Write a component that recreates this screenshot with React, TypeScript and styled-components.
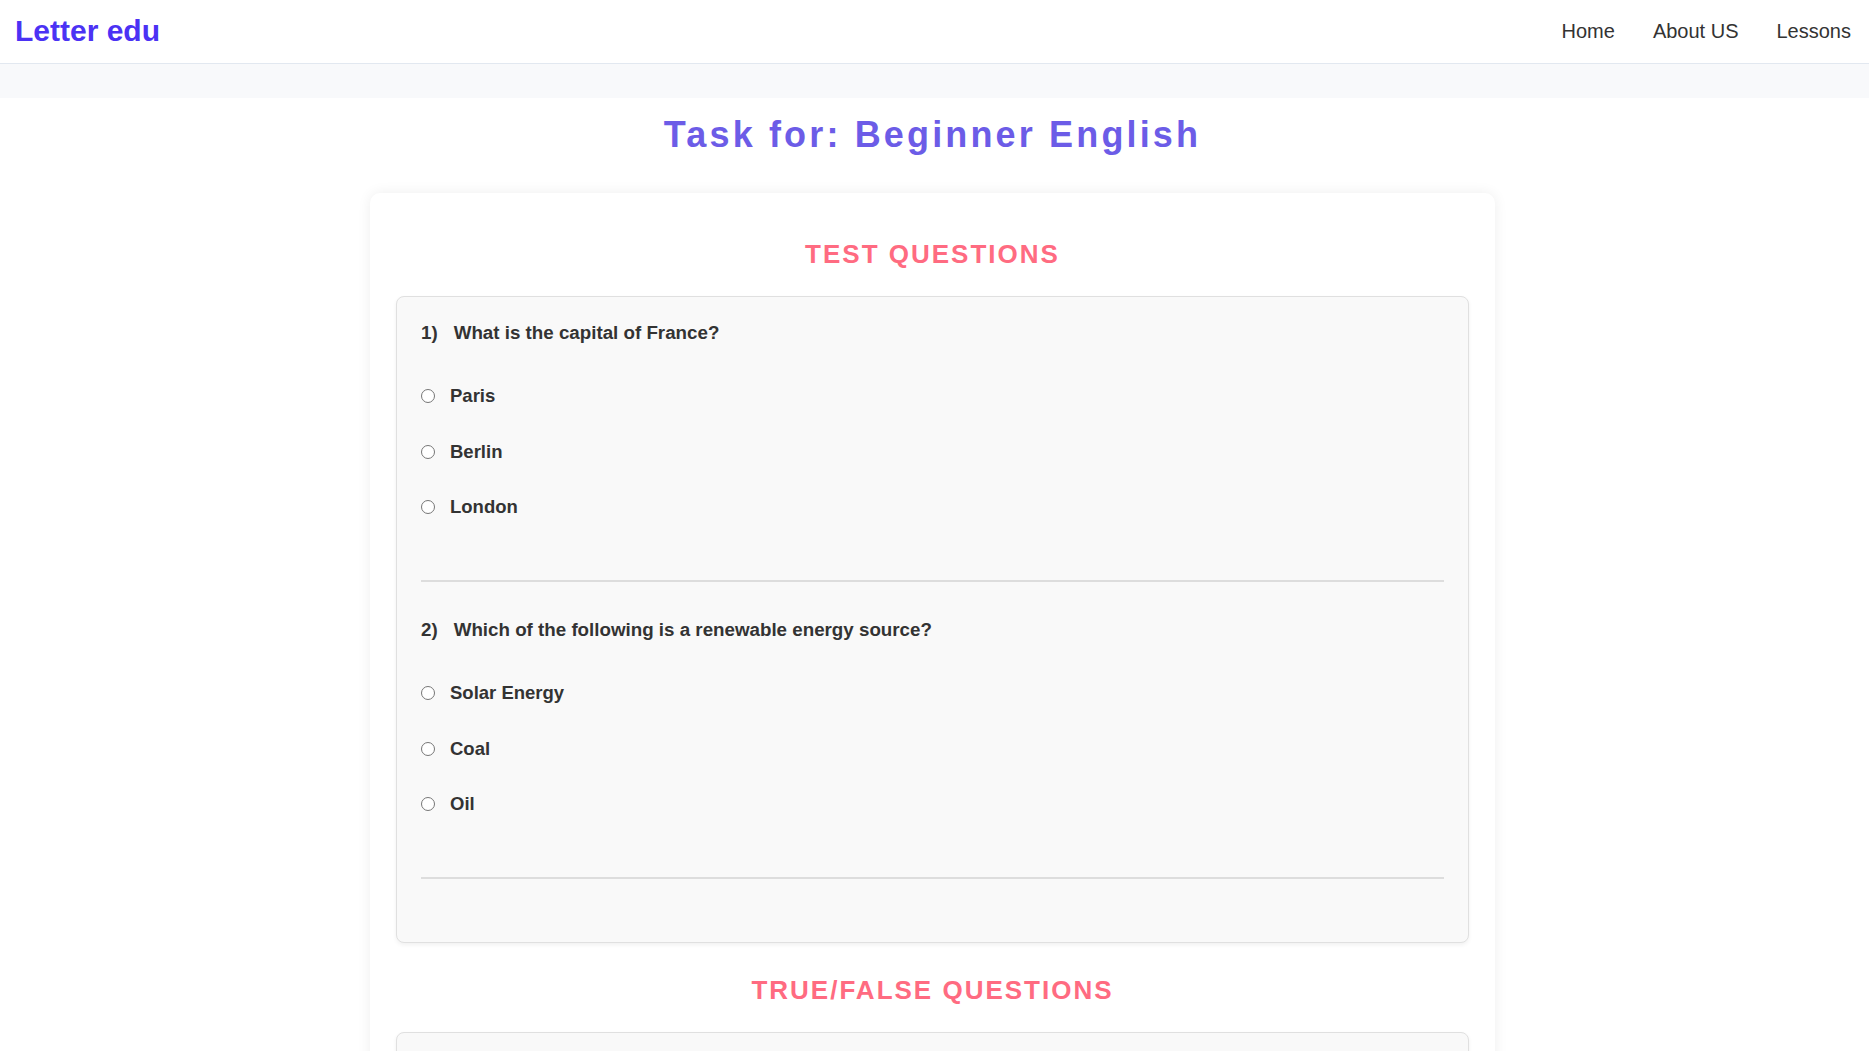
import React from "react";
import styled, { createGlobalStyle } from "styled-components";

const GlobalStyle = createGlobalStyle`
  html, body {
    margin: 0;
    padding: 0;
    background: #ffffff;
    font-family: "Liberation Sans", Arial, Helvetica, sans-serif;
    color: #333333;
  }
  * { box-sizing: border-box; }
  ::-webkit-scrollbar { display: none; }
`;

const Header = styled.header`
  height: 64px;
  display: flex;
  align-items: center;
  justify-content: space-between;
  padding: 0 18px 0 15px;
  background: #ffffff;
  border-bottom: 1px solid #e2e8f0;
`;

const Logo = styled.a`
  font-size: 30px;
  font-weight: 700;
  color: #4b32f4;
  text-decoration: none;
  line-height: 34px;
  padding-bottom: 2px;
`;

const Nav = styled.nav`
  display: flex;
  align-items: center;
  gap: 38px;
`;

const NavLink = styled.a`
  font-size: 20px;
  color: #333333;
  text-decoration: none;
  line-height: 23px;
`;

const Band = styled.div`
  height: 34px;
  background: #f8f9fb;
`;

const Main = styled.main`
  display: flex;
  flex-direction: column;
  align-items: center;
  padding: 0 4px 40px 0;
`;

const PageTitle = styled.h1`
  margin: 16px 0 37px;
  font-size: 36px;
  line-height: 42px;
  font-weight: 700;
  letter-spacing: 3.15px;
  color: #6c5ce7;
  text-align: center;
`;

const Card = styled.section`
  width: 1125px;
  padding: 46px 26px 26px;
  background: #ffffff;
  border-radius: 10px;
  box-shadow: 0 0 14px rgba(0, 0, 0, 0.07);
`;

const SectionTitle = styled.h2`
  margin: 0 0 27px;
  font-size: 26px;
  line-height: 30px;
  font-weight: 700;
  letter-spacing: 2px;
  color: #ff6b81;
  text-align: center;
`;

const QuestionBox = styled.div`
  margin-bottom: 32px;
  padding: 25px 24px 63px;
  background: #f9f9f9;
  border: 1px solid #e0e0e0;
  border-radius: 8px;
  box-shadow: 0 2px 4px rgba(0, 0, 0, 0.06);
`;

const QuestionBlock = styled.div`
  display: flex;
  flex-direction: column;
  & + & {
    margin-top: 37px;
  }
`;

const QuestionText = styled.p`
  margin: 0;
  display: flex;
  font-size: 18.75px;
  line-height: 22px;
  font-weight: 700;
  color: #333333;
`;

const Number = styled.span`
  margin-right: 16px;
`;

const OptionList = styled.div`
  margin-top: 41px;
  display: flex;
  flex-direction: column;
  gap: 33.5px;
`;

const OptionLabel = styled.label`
  display: flex;
  align-items: center;
  gap: 15px;
  height: 22px;
  font-size: 18.5px;
  font-weight: 700;
  color: #333333;
  cursor: pointer;
`;

const Radio = styled.input`
  appearance: none;
  -webkit-appearance: none;
  margin: 0;
  width: 14px;
  height: 14px;
  flex: none;
  border: 1px solid #767676;
  border-radius: 50%;
  background: #ffffff;
  &:checked {
    border: 4px solid #0075ff;
  }
`;

const Divider = styled.hr`
  margin: 62px 0 0;
  height: 2px;
  border: none;
  background: #dddddd;
`;

type Question = { q: string; options: string[] };

const testQuestions: Question[] = [
  { q: "What is the capital of France?", options: ["Paris", "Berlin", "London"] },
  {
    q: "Which of the following is a renewable energy source?",
    options: ["Solar Energy", "Coal", "Oil"],
  },
];

const tfQuestions: Question[] = [
  { q: "The sun rises in the east.", options: ["True", "False"] },
  { q: "Water boils at 50 degrees Celsius.", options: ["True", "False"] },
];

function QuestionList({ items, prefix }: { items: Question[]; prefix: string }) {
  return (
    <QuestionBox>
      {items.map((item, i) => (
        <QuestionBlock key={i}>
          <QuestionText>
            <Number>{i + 1})</Number>
            {item.q}
          </QuestionText>
          <OptionList>
            {item.options.map((opt) => (
              <OptionLabel key={opt}>
                <Radio type="radio" name={`${prefix}-${i}`} value={opt} />
                {opt}
              </OptionLabel>
            ))}
          </OptionList>
          <Divider />
        </QuestionBlock>
      ))}
    </QuestionBox>
  );
}

export default function App() {
  return (
    <>
      <GlobalStyle />
      <Header>
        <Logo href="#">Letter edu</Logo>
        <Nav>
          <NavLink href="#">Home</NavLink>
          <NavLink href="#">About US</NavLink>
          <NavLink href="#">Lessons</NavLink>
        </Nav>
      </Header>
      <Band />
      <Main>
        <PageTitle>Task for: Beginner English</PageTitle>
        <Card>
          <SectionTitle>TEST QUESTIONS</SectionTitle>
          <QuestionList items={testQuestions} prefix="test" />
          <SectionTitle>TRUE/FALSE QUESTIONS</SectionTitle>
          <QuestionList items={tfQuestions} prefix="tf" />
        </Card>
      </Main>
    </>
  );
}
